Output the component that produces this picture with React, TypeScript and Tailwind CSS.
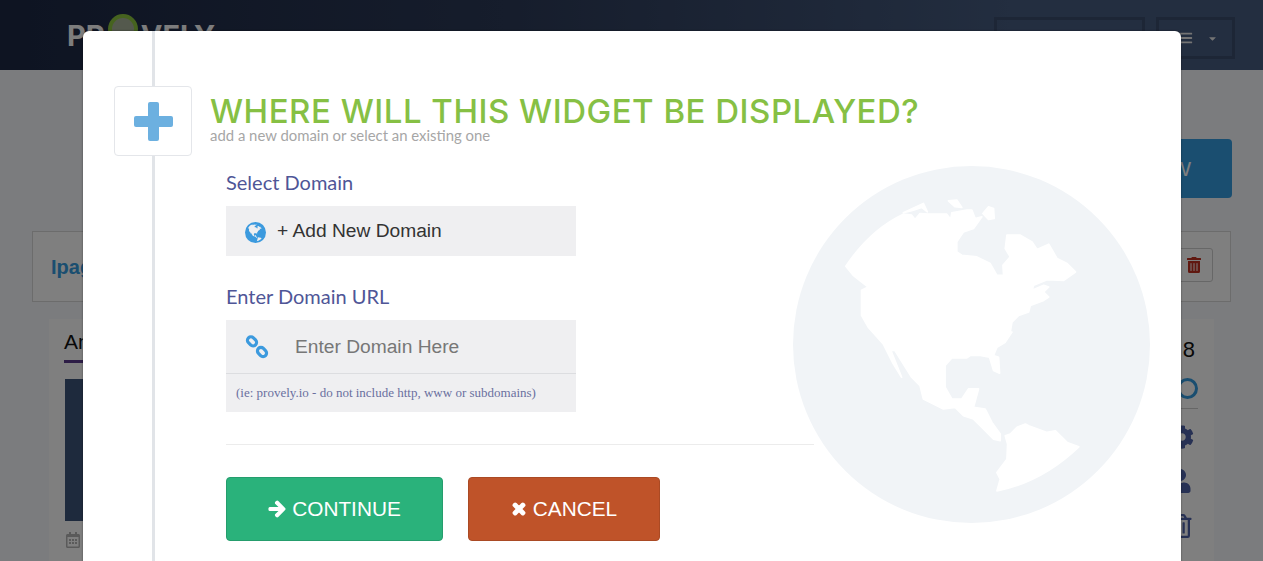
import React from 'react';
import { FaArrowRight, FaTimes, FaCog, FaUser, FaTrashAlt, FaRegTrashAlt, FaBars, FaCaretDown, FaRegCalendarAlt } from 'react-icons/fa';

const GlobeIcon = ({ className, land }: { className: string; land: string }) => (
  <svg viewBox="40 48 1068 1068" className={className}>
    <circle cx="574" cy="582" r="534" />
    <g className={land}>
      <path d="M198 348 C240 285 300 225 370 192 L395 195 L405 208 L420 190 L445 192 L500 192 L512 208 L515 188 L560 180 L575 180 L585 205 L605 200 L580 235 L550 245 L530 275 L530 305 L545 315 L590 320 L630 340 L650 375 L670 375 L668 345 L690 320 L675 295 L680 255 L720 255 L755 275 L770 298 L805 282 L830 325 L860 340 L885 365 L850 390 L800 388 L760 405 L755 420 L790 405 L805 410 L790 425 L805 440 L790 450 L750 465 L745 485 L715 495 L695 515 L690 545 L695 545 L675 575 L650 590 L640 615 L655 620 L658 668 L640 660 L628 620 L600 615 L570 615 L560 622 L515 622 L495 645 L495 710 L515 745 L545 745 L565 715 L595 715 L580 770 L615 775 L635 815 L660 850 L660 870 L640 865 L600 825 L580 805 L550 795 L525 770 L490 775 L430 745 L420 705 L395 680 L345 600 L333 600 L365 680 L340 640 L310 580 L265 530 L245 495 L245 420 L265 410 L220 375 Z" />
      <path d="M675 855 L690 850 L710 830 L735 820 L745 825 L800 845 L825 840 L860 875 L895 888 C830 950 750 1000 650 1020 L660 985 L650 965 L680 925 L682 880 Z" />
      <path d="M505 152 L530 150 L545 172 L525 170 Z" />
      <path d="M608 190 L625 170 L640 175 L642 205 L625 208 Z" />
      <path d="M370 188 L430 160 L442 185 L425 172 L395 182 Z" />
    </g>
  </svg>
);

const BackgroundPage = () => (
  <div className="h-[561px] bg-[#f6f8fc] font-['Liberation_Sans',sans-serif]">
    <header className="h-[70px] bg-gradient-to-r from-[#1c2844] via-[#2c3a58] via-40% to-[#465c80] to-80% flex items-center justify-between pl-[67px] pr-[28px]">
      <div className="flex items-center text-[29px] font-bold text-[#fafafa] leading-none font-['Inter',sans-serif]">
        PR
        <span className="mx-[3px] w-[30px] h-[30px] rounded-full border-[4px] border-[#8cc63f] bg-[#a9b39a] -mt-[12px]" />
        VELY
      </div>
      <div className="flex gap-[11px] mt-[6px]">
        <div className="w-[151px] h-[42px] border-[3px] border-[#3a4c6c]" />
        <div className="w-[79px] h-[42px] border-[3px] border-[#3a4c6c] flex items-center justify-center gap-[14px] pl-[5px] text-[#e8e8e8]">
          <FaBars size={14} />
          <FaCaretDown size={11} />
        </div>
      </div>
    </header>
    <div className="px-[32px]">
      <div className="flex justify-end pt-[69px] -mr-[1px]">
        <div className="h-[59px] w-[200px] rounded-[4px] bg-[#349ce0] text-white text-[21px] flex items-center justify-end pr-[41px]">NEW</div>
      </div>
      <div className="mt-[33px] w-[1199px] border border-[#d8d8d8] bg-[#fefefe] h-[71px] flex items-center justify-between pl-[18px] pr-[17px]">
        <span className="text-[#349ce0] text-[20px] font-bold">Ipage.com</span>
        <div className="-mt-[4px] w-[80px] h-[34px] border border-[#cfcfcf] rounded-[3px] flex items-center justify-end pr-[10px] text-[#c03020]">
          <FaTrashAlt size={16} />
        </div>
      </div>
      <div className="ml-[17px] mt-[17px] w-[1165px] h-[300px] bg-[#fefefe] flex justify-between px-[15px] pt-[10px]">
        <div className="w-[200px]">
          <div className="text-[21px] text-[#111] leading-[26px] pb-[5px] border-b-[3px] border-[#5a3a8c] w-[20px] whitespace-nowrap">Analytics</div>
          <div className="mt-[16px] ml-[1px] w-[18px] h-[142px] bg-[#3c547a]" />
          <FaRegCalendarAlt size={16} className="mt-[11px] ml-[1px] text-[#b5b5b5]" />
        </div>
        <div className="w-[40px] flex flex-col items-end">
          <div className="mt-[8px] text-[22px] text-[#111] leading-[26px] pr-[4px]">8</div>
          <div className="mt-[15px] mr-[1px] w-[21px] h-[21px] rounded-full border-[3px] border-[#349ce0]" />
          <div className="mt-[9px] mr-[1px] w-[40px] border-t border-[#ccc]" />
          <FaCog size={24} className="mt-[16px] mr-[5px] text-[#4f62a8]" />
          <FaUser size={24} className="mt-[20px] mr-[7px] text-[#4f62a8]" />
          <FaRegTrashAlt size={24} className="mt-[21px] mr-[6px] text-[#4f62a8]" />
        </div>
      </div>
    </div>
  </div>
);

export default function App() {
  return (
    <div className="relative h-[561px] overflow-hidden">
      <BackgroundPage />
      <div className="absolute inset-0 bg-black/50" />

      <div className="absolute left-[83px] top-[31px] w-[1098px] h-[560px] bg-white rounded-[6px] shadow-[0_0_2px_rgba(0,0,0,0.5)]">
        {/* timeline rail */}
        <div className="absolute left-[69px] top-0 bottom-0 w-[3px] bg-[#e1e4e8]" />
        {/* big faded globe */}
        <GlobeIcon className="absolute left-[710px] top-[135px] w-[357px] h-[357px] fill-[#f1f4f7]" land="fill-white stroke-white stroke-[5] [stroke-linejoin:round]" />

        <div className="relative pt-[55px] pl-[31px]">
          <div className="flex">
            <div className="w-[78px] h-[70px] bg-white border border-[#e4e6ea] rounded-[4px] flex items-center justify-center">
              <svg viewBox="0 0 39 39" className="w-[39px] h-[39px] fill-[#6cb0e0]">
                <rect x="14" y="0" width="11" height="39" rx="2" />
                <rect x="0" y="14" width="39" height="11" rx="2" />
              </svg>
            </div>
            <div className="ml-[18px] pt-[10px]">
              <h1 className="text-[33px] leading-[30px] text-[#86c044] font-['Inter',sans-serif] font-[450] tracking-[0.5px] whitespace-nowrap">WHERE WILL THIS WIDGET BE DISPLAYED?</h1>
              <p className="mt-[2px] text-[14.9px] leading-[15px] text-[#a6a6a6] font-['Lato',sans-serif]">add a new domain or select an existing one</p>
            </div>
          </div>

          <div className="ml-[112px] w-[588px]">
            <div className="mt-[13px] text-[20px] leading-[26px] text-[#4f5697] font-['Lato',sans-serif]">Select Domain</div>
            <div className="mt-[11px] w-[350px] h-[50px] bg-[#efeff1] flex items-center pl-[19px] font-['Liberation_Sans',sans-serif]">
              <GlobeIcon className="w-[21px] h-[21px] fill-[#3c9ade] mt-[3px]" land="fill-[#efeff1]" />
              <span className="ml-[11px] text-[19.2px] text-[#333]">+ Add New Domain</span>
            </div>

            <div className="mt-[27px] text-[20px] leading-[26px] text-[#4f5697] font-['Lato',sans-serif]">Enter Domain URL</div>
            <div className="mt-[11px] w-[350px] bg-[#efeff1] font-['Liberation_Sans',sans-serif]">
              <div className="h-[54px] flex items-center pl-[19px] border-b border-[#dcdde0]">
                <svg viewBox="0 0 24 24" className="w-[24px] h-[24px] fill-none stroke-[#3c9ade] stroke-[3.2]">
                  <rect x="2" y="2.8" width="10" height="7" rx="3.5" transform="rotate(45 7 6.3)" />
                  <rect x="12" y="13.5" width="10" height="7" rx="3.5" transform="rotate(45 17 17)" />
                </svg>
                <span className="ml-[26px] pt-[1px] text-[19.2px] text-[#777]">Enter Domain Here</span>
              </div>
              <div className="h-[38px] flex items-center pl-[10px] text-[13px] text-[#6a6f9f] font-['Liberation_Serif',serif]">
                (ie: provely.io - do not include http, www or subdomains)
              </div>
            </div>

            <hr className="mt-[32px] border-[#ececec]" />

            <div className="mt-[32px] flex gap-[25px] font-['Liberation_Sans',sans-serif] text-white text-[20.8px]">
              <button className="w-[217px] h-[64px] rounded-[4px] bg-[#2ab27b] border border-[#259d6d] flex items-center justify-center gap-[6px]">
                <FaArrowRight size={18} stroke="currentColor" strokeWidth={40} />
                CONTINUE
              </button>
              <button className="w-[192px] h-[64px] rounded-[4px] bg-[#bf5329] border border-[#aa4a24] flex items-center justify-center gap-[6px]">
                <FaTimes size={16} stroke="currentColor" strokeWidth={60} />
                CANCEL
              </button>
            </div>
          </div>
        </div>
      </div>
    </div>
  );
}
